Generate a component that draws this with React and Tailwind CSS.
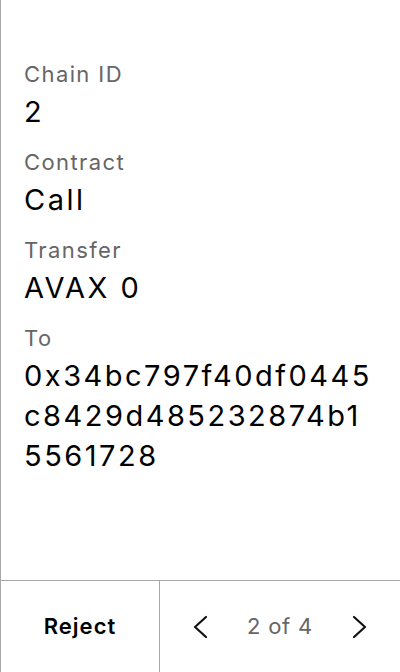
import React from "react";

function Field({ label, value, last }) {
  return (
    <div className={last ? "" : "mb-3"}>
      <div className="text-[22px] leading-9 tracking-[1.4px] text-[#666666]">{label}</div>
      <div className="text-[29px] leading-10 tracking-[2.5px] text-black break-all">{value}</div>
    </div>
  );
}

function Chevron({ dir }) {
  return (
    <svg width="16" height="24" viewBox="0 0 16 24" fill="none" className="block">
      {dir === "left" ? (
        <path d="M14 2 L3 12 L14 22" stroke="#111" strokeWidth="2.2" strokeLinecap="round" strokeLinejoin="round" />
      ) : (
        <path d="M2 2 L13 12 L2 22" stroke="#111" strokeWidth="2.2" strokeLinecap="round" strokeLinejoin="round" />
      )}
    </svg>
  );
}

export default function App() {
  return (
    <div
      className="w-[400px] h-[672px] flex flex-col bg-white border-l border-[#a8a8a8]"
      style={{ fontFamily: "Inter, 'Noto Sans', sans-serif" }}
    >
      <div className="flex-1 pt-[56px] pl-[23px] pr-[26px]">
        <Field label="Chain ID" value="2" />
        <Field label="Contract" value="Call" />
        <Field label="Transfer" value="AVAX 0" />
        <Field label="To" value="0x34bc797f40df0445c8429d485232874b15561728" last />
      </div>
      <div className="h-[92px] flex border-t border-[#a8a8a8]">
        <div className="w-[159px] flex items-center justify-center border-r border-[#a8a8a8]">
          <span className="text-[22px] font-semibold tracking-[1px] text-black">Reject</span>
        </div>
        <div className="flex-1 flex items-center justify-between px-8">
          <Chevron dir="left" />
          <span className="text-[22px] tracking-[0.8px] text-[#666666]">2 of 4</span>
          <Chevron dir="right" />
        </div>
      </div>
    </div>
  );
}
